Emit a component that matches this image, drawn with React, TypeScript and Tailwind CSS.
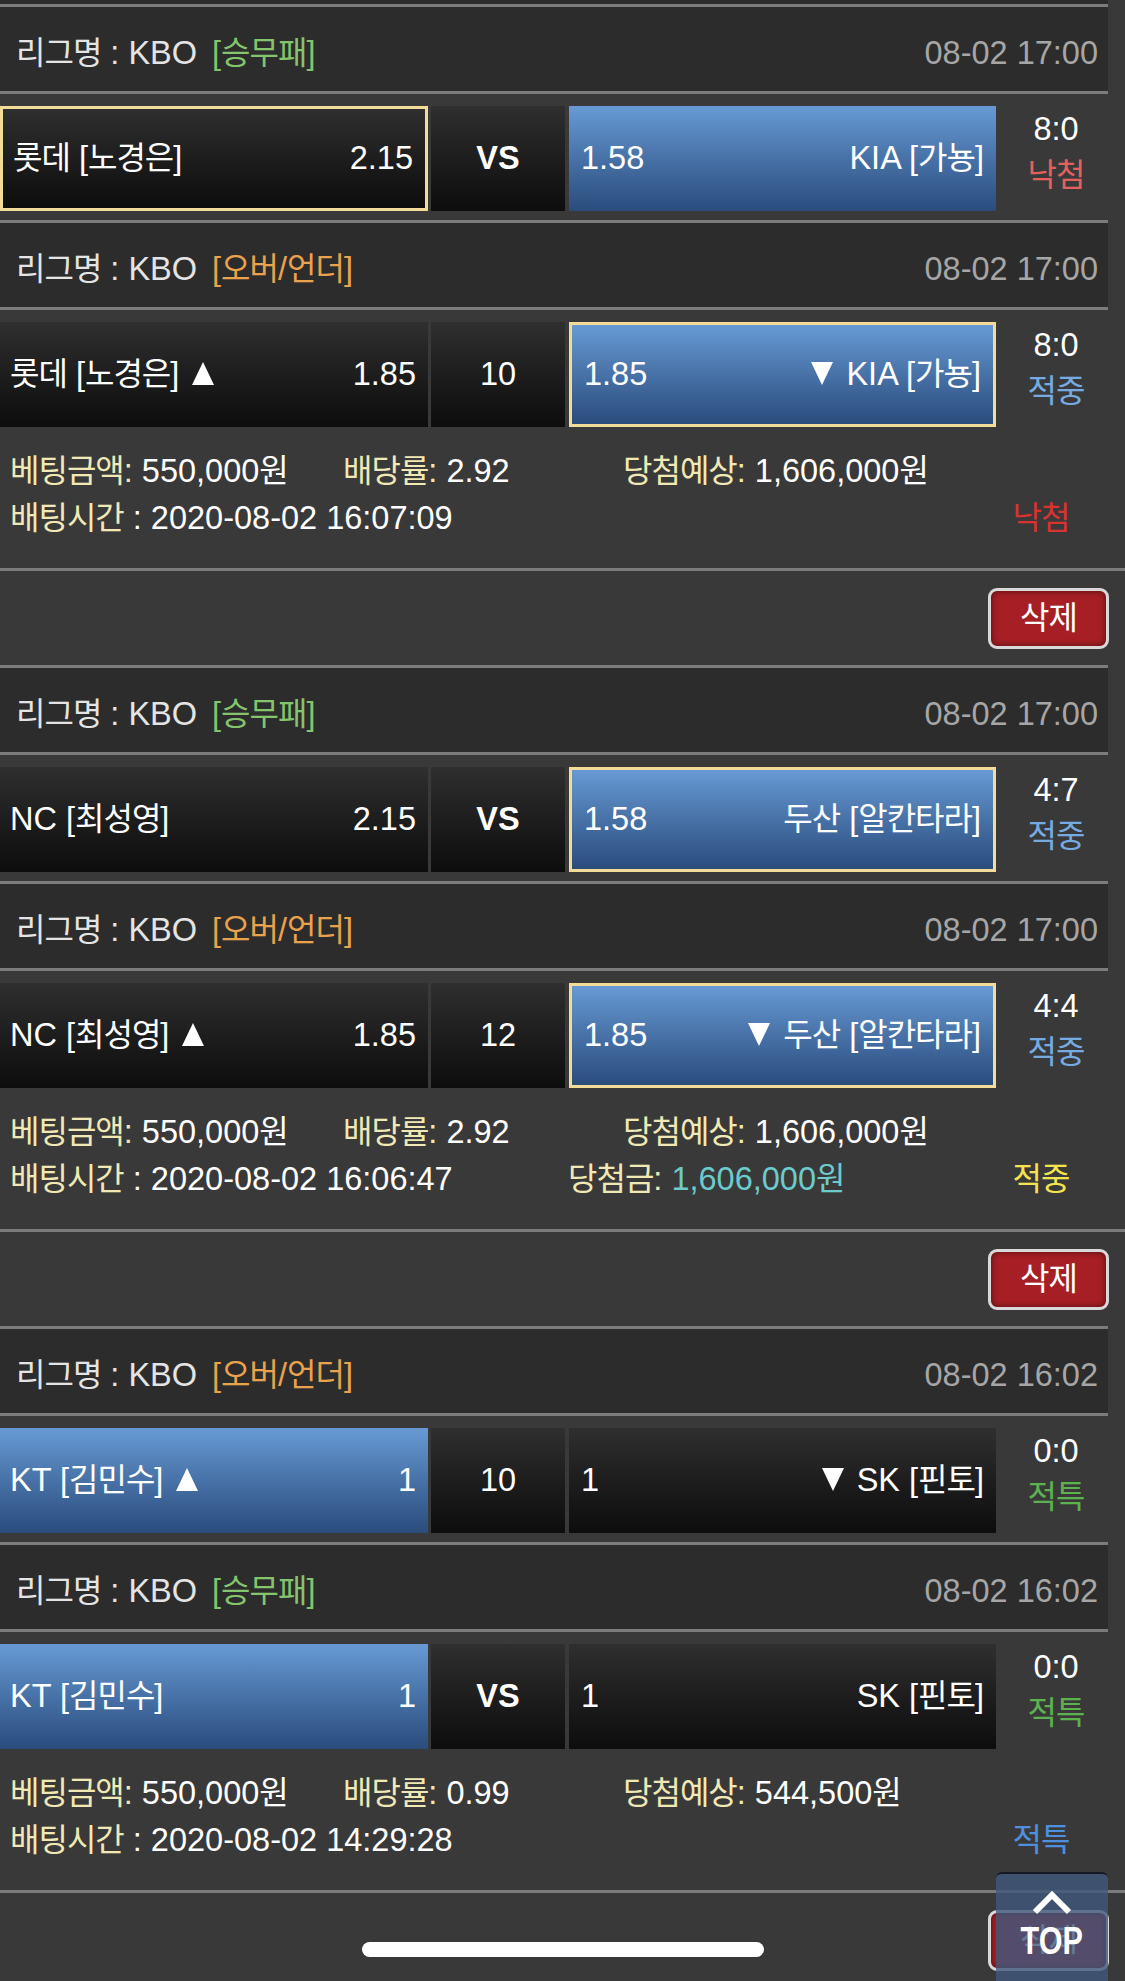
import React from "react";

const HANGUL_RE = /([\u1100-\u11FF\u3130-\u318F\uAC00-\uD7AF]+)/;

function K({ s }: { s: string }) {
  const parts = s.split(HANGUL_RE);
  return (
    <>
      {parts.map((p, i) =>
        i % 2 === 1 ? (
          <span key={i} className="text-[32px] tracking-[-1px]">
            {p}
          </span>
        ) : (
          <React.Fragment key={i}>{p}</React.Fragment>
        )
      )}
    </>
  );
}

function Up() {
  return (
    <svg width="22" height="23" viewBox="0 0 22 23" className="ml-[4px] inline-block align-baseline">
      <path d="M11 0 L22 23 L0 23 Z" fill="white" />
    </svg>
  );
}

function Down() {
  return (
    <svg width="22" height="23" viewBox="0 0 22 23" className="mr-[4px] inline-block align-baseline">
      <path d="M0 0 L22 0 L11 23 Z" fill="white" />
    </svg>
  );
}

type Side = { team: string; odds: string; tri?: "up" | "down"; blue?: boolean; picked?: boolean };
type Game = {
  ou: boolean;
  date: string;
  left: Side;
  mid: string;
  right: Side;
  score: string;
  result: string;
  resultColor: string;
};

function boxClass(s: Side) {
  const bg = s.blue
    ? "bg-gradient-to-b from-[#679ad4] to-[#2a4c7d]"
    : "bg-gradient-to-b from-[#2f2f2f] to-[#0d0d0d]";
  const border = s.picked ? "border-[3px] border-[#f2dc98]" : "";
  return `${bg} ${border}`;
}

function GameBlock({ g }: { g: Game }) {
  return (
    <div>
      <div className="flex h-[90px] w-[1108px] items-center justify-between border-y-[3px] border-[#7c7c7c] bg-[#2c2c2c] pl-[16px] pr-[10px] pt-[8px]">
        <div className="text-[#e4e4e4]">
          <K s="리그명 : KBO" />
          <span className={`ml-[15px] ${g.ou ? "text-[#e9a24d]" : "text-[#84c46c]"}`}>
            <K s={g.ou ? "[오버/언더]" : "[승무패]"} />
          </span>
        </div>
        <div className="text-[#a6a6a6]">{g.date}</div>
      </div>
      <div className="flex pb-[9px] pt-[12px]">
        <div
          className={`flex h-[105px] w-[428px] items-center justify-between pl-[10px] pr-[12px] ${boxClass(g.left)}`}
        >
          <div>
            <K s={g.left.team} />
            {g.left.tri === "up" ? (
              <>
                {" "}
                <Up />
              </>
            ) : null}
          </div>
          <div>{g.left.odds}</div>
        </div>
        <div className="ml-[3px] flex h-[105px] w-[134px] items-center justify-center bg-gradient-to-b from-[#2f2f2f] to-[#0d0d0d]">
          <span className={g.mid === "VS" ? "font-bold" : ""}>{g.mid}</span>
        </div>
        <div
          className={`ml-[4px] flex h-[105px] w-[427px] items-center justify-between pl-[12px] pr-[12px] ${boxClass(g.right)}`}
        >
          <div>{g.right.odds}</div>
          <div>
            {g.right.tri === "down" ? (
              <>
                <Down />{" "}
              </>
            ) : null}
            <K s={g.right.team} />
          </div>
        </div>
        <div className="flex w-[120px] flex-col items-center leading-[46px]">
          <div>{g.score}</div>
          <div className={g.resultColor}>
            <K s={g.result} />
          </div>
        </div>
      </div>
    </div>
  );
}

type Bet = {
  amount: string;
  rate: string;
  expect: string;
  time: string;
  win?: string;
  result: string;
  resultColor: string;
};

function BetInfo({ b }: { b: Bet }) {
  return (
    <div className="pb-[26px] pl-[10px] pt-[12px] leading-[47px]">
      <div className="flex">
        <div className="w-[333px]">
          <span className="text-[#f1e9b5]">
            <K s="베팅금액:" />
          </span>{" "}
          <K s={b.amount} />
        </div>
        <div className="w-[280px]">
          <span className="text-[#f1e9b5]">
            <K s="배당률:" />
          </span>{" "}
          {b.rate}
        </div>
        <div>
          <span className="text-[#f1e9b5]">
            <K s="당첨예상:" />
          </span>{" "}
          <K s={b.expect} />
        </div>
      </div>
      <div className="flex">
        <div className="w-[558px]">
          <span className="text-[#f1e9b5]">
            <K s="배팅시간" />
          </span>{" "}
          : {b.time}
        </div>
        <div className="flex-1">
          {b.win ? (
            <>
              <span className="text-[#f1e9b5]">
                <K s="당첨금:" />
              </span>{" "}
              <span className="text-[#6ccbcc]">
                <K s={b.win} />
              </span>
            </>
          ) : null}
        </div>
        <div className={`mr-[34px] w-[100px] text-center ${b.resultColor}`}>
          <K s={b.result} />
        </div>
      </div>
    </div>
  );
}

function DeleteArea() {
  return (
    <div className="flex h-[97px] items-center justify-end border-t-[3px] border-[#7c7c7c] pr-[16px]">
      <div className="flex h-[61px] w-[121px] items-center justify-center rounded-[9px] border-[3px] border-[#d9d9d9] bg-[#a61f24] text-white shadow-[inset_0_0_6px_rgba(0,0,0,0.55)]">
        <K s="삭제" />
      </div>
    </div>
  );
}

const slips: { games: Game[]; bet: Bet }[] = [
  {
    games: [
      {
        ou: false,
        date: "08-02 17:00",
        left: { team: "롯데 [노경은]", odds: "2.15", picked: true },
        mid: "VS",
        right: { team: "KIA [가뇽]", odds: "1.58", blue: true },
        score: "8:0",
        result: "낙첨",
        resultColor: "text-[#e4605d]",
      },
      {
        ou: true,
        date: "08-02 17:00",
        left: { team: "롯데 [노경은]", odds: "1.85", tri: "up" },
        mid: "10",
        right: { team: "KIA [가뇽]", odds: "1.85", tri: "down", blue: true, picked: true },
        score: "8:0",
        result: "적중",
        resultColor: "text-[#76abe2]",
      },
    ],
    bet: {
      amount: "550,000원",
      rate: "2.92",
      expect: "1,606,000원",
      time: "2020-08-02 16:07:09",
      result: "낙첨",
      resultColor: "text-[#d8332f]",
    },
  },
  {
    games: [
      {
        ou: false,
        date: "08-02 17:00",
        left: { team: "NC [최성영]", odds: "2.15" },
        mid: "VS",
        right: { team: "두산 [알칸타라]", odds: "1.58", blue: true, picked: true },
        score: "4:7",
        result: "적중",
        resultColor: "text-[#76abe2]",
      },
      {
        ou: true,
        date: "08-02 17:00",
        left: { team: "NC [최성영]", odds: "1.85", tri: "up" },
        mid: "12",
        right: { team: "두산 [알칸타라]", odds: "1.85", tri: "down", blue: true, picked: true },
        score: "4:4",
        result: "적중",
        resultColor: "text-[#76abe2]",
      },
    ],
    bet: {
      amount: "550,000원",
      rate: "2.92",
      expect: "1,606,000원",
      time: "2020-08-02 16:06:47",
      win: "1,606,000원",
      result: "적중",
      resultColor: "text-[#f3e44f]",
    },
  },
  {
    games: [
      {
        ou: true,
        date: "08-02 16:02",
        left: { team: "KT [김민수]", odds: "1", tri: "up", blue: true },
        mid: "10",
        right: { team: "SK [핀토]", odds: "1", tri: "down" },
        score: "0:0",
        result: "적특",
        resultColor: "text-[#5cb24e]",
      },
      {
        ou: false,
        date: "08-02 16:02",
        left: { team: "KT [김민수]", odds: "1", blue: true },
        mid: "VS",
        right: { team: "SK [핀토]", odds: "1" },
        score: "0:0",
        result: "적특",
        resultColor: "text-[#5cb24e]",
      },
    ],
    bet: {
      amount: "550,000원",
      rate: "0.99",
      expect: "544,500원",
      time: "2020-08-02 14:29:28",
      result: "적특",
      resultColor: "text-[#4e8fdf]",
    },
  },
];

export default function App() {
  return (
    <div className="relative h-[1981px] w-[1125px] overflow-hidden bg-[#393939] font-['Liberation_Sans','Noto_Sans_CJK_KR',sans-serif] text-[32.5px] text-white">
      <div className="h-[4px] w-[1108px] bg-[#2c2c2c]" />
      {slips.map((s, i) => (
        <div key={i}>
          {s.games.map((g, j) => (
            <GameBlock key={j} g={g} />
          ))}
          <BetInfo b={s.bet} />
          <DeleteArea />
        </div>
      ))}

      {/* TOP floating button */}
      <div className="absolute left-[996px] top-[1872px] flex h-[125px] w-[112px] flex-col items-center rounded-t-[6px] border-t-[2px] border-[#151a24] bg-[rgba(64,88,125,0.8)]">
        <svg width="40" height="24" viewBox="0 0 40 24" className="mt-[17px]">
          <path d="M3 21 L20 4 L37 21" fill="none" stroke="white" strokeWidth="6" strokeLinejoin="miter" />
        </svg>
        <div className="mt-[6px] origin-top scale-x-[0.85] scale-y-[1.1] text-[36px] font-bold leading-none text-white">TOP</div>
      </div>

      {/* home indicator */}
      <div className="absolute left-[362px] top-[1942px] h-[15px] w-[402px] rounded-full bg-white" />
    </div>
  );
}
